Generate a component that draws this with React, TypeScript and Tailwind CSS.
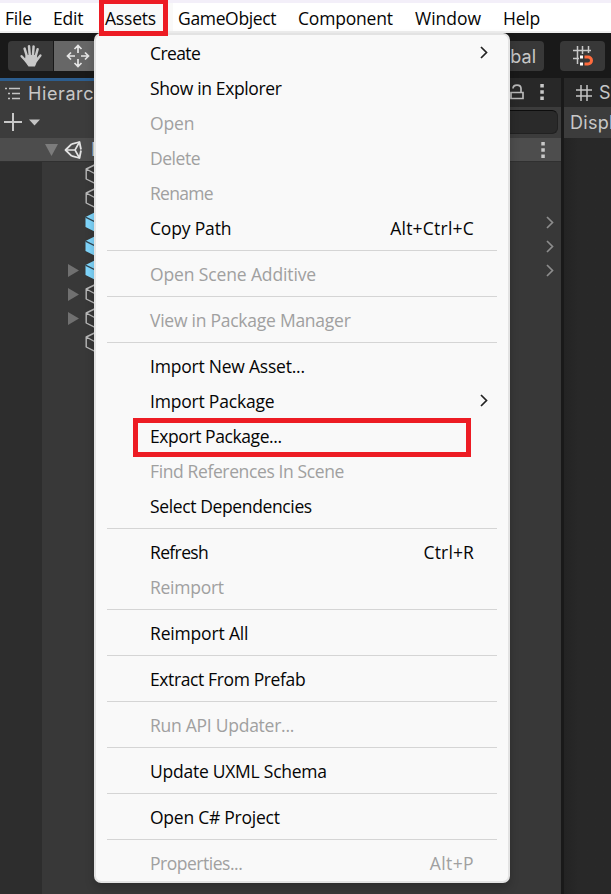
import React from "react";

type Entry = { label: string; t: string; keys?: string; kt?: string; off?: boolean; sub?: boolean } | null;

const entries: Entry[] = [
  { label: "Create", t: "tracking-[-0.6px]", sub: true },
  { label: "Show in Explorer", t: "tracking-[-0.36px]" },
  { label: "Open", t: "tracking-[-0.1px]", off: true },
  { label: "Delete", t: "tracking-[-0.47px]", off: true },
  { label: "Rename", t: "tracking-[-0.7px]", off: true },
  { label: "Copy Path", t: "tracking-[-0.17px]", keys: "Alt+Ctrl+C", kt: "tracking-[0.22px]" },
  null,
  { label: "Open Scene Additive", t: "tracking-[-0.13px]", off: true },
  null,
  { label: "View in Package Manager", t: "tracking-[-0.25px]", off: true },
  null,
  { label: "Import New Asset...", t: "tracking-[-0.22px]" },
  { label: "Import Package", t: "tracking-[-0.2px]", sub: true },
  { label: "Export Package...", t: "tracking-[-0.42px]" },
  { label: "Find References In Scene", t: "tracking-[-0.38px]", off: true },
  { label: "Select Dependencies", t: "tracking-[-0.37px]" },
  null,
  { label: "Refresh", t: "tracking-[-0.63px]", keys: "Ctrl+R", kt: "tracking-[0.13px]" },
  { label: "Reimport", t: "tracking-[-0.26px]", off: true },
  null,
  { label: "Reimport All", t: "tracking-[-0.17px]" },
  null,
  { label: "Extract From Prefab", t: "tracking-[-0.38px]" },
  null,
  { label: "Run API Updater...", t: "tracking-[-0.26px]", off: true },
  null,
  { label: "Update UXML Schema", t: "tracking-[-0.25px]" },
  null,
  { label: "Open C# Project", t: "tracking-[-0.25px]" },
  null,
  { label: "Properties...", t: "tracking-[-0.48px]", keys: "Alt+P", kt: "tracking-[0.4px]", off: true },
];

const tree = [
  { blue: false, arrow: false, open: false },
  { blue: false, arrow: false, open: false },
  { blue: true, arrow: false, open: true },
  { blue: true, arrow: false, open: true },
  { blue: true, arrow: true, open: true },
  { blue: false, arrow: true, open: false },
  { blue: false, arrow: true, open: false },
  { blue: false, arrow: false, open: false },
];

function Hand() {
  return (
    <svg width="24" height="24" viewBox="0 0 24 24" fill="none" stroke="#c8c8c8" strokeLinecap="round" strokeLinejoin="round">
      <path d="M8 12.500 5.600 4.600M10.800 12 10 2.200M13.900 12 14.600 2.400M16.500 13 18.600 5.200" strokeWidth="2.500" />
      <path d="M2.600 12.200 7.500 17.500M21.400 11.500 17.500 16.500" strokeWidth="2.400" />
      <path d="M7.200 11.500H17.400L18 16 15.500 22H9.800L6.300 17Z" fill="#c8c8c8" strokeWidth="1.200" />
    </svg>
  );
}

function Move() {
  return (
    <svg width="24" height="24" viewBox="0 0 24 24" fill="none" stroke="#e6e6e6" strokeWidth="1.700">
      <path d="M12 9V1.500M8.500 5 12 1.500 15.500 5M12 15v7.500M8.500 19l3.500 3.500 3.500-3.500M9 12H1.500M5 8.500 1.500 12 5 15.500M15 12h7.500M19 8.500l3.500 3.500-3.500 3.500" />
    </svg>
  );
}

function Cube({ blue }: { blue: boolean }) {
  return blue ? (
    <svg width="22" height="22" viewBox="0 0 22 22">
      <path d="M.5 6 10.500 1 20 6v10l-9.500 5L.5 16Z" fill="#7fd6fc" />
      <path d="M.5 6.200 10.500 11 20 6.200M10.500 11v10" stroke="#33454f" strokeWidth="1.300" fill="none" />
    </svg>
  ) : (
    <svg width="22" height="22" viewBox="0 0 22 22" fill="none" stroke="#b9b9b9" strokeWidth="1.400" strokeLinejoin="round">
      <path d="M1.200 6 10.500 1.500 19.500 6v10l-9 4.700L1.200 16ZM1.200 6 10.500 11l9-5M10.500 11v9.700" />
    </svg>
  );
}

function UnityLogo() {
  return (
    <svg width="20" height="20" viewBox="0 0 20 20" fill="none" stroke="#e4e4e4" strokeWidth="1.800" strokeLinejoin="round">
      <path d="M7.500 4.200 15.500 2 17 9.500M17 10.500 15.500 18 7.500 15.800M7.500 4.200 1.500 10l6 5.800" />
      <path d="M1.500 10H11M11 10 15.500 2M11 10l4.500 8" strokeWidth="1.600" />
    </svg>
  );
}

function Dots() {
  return (
    <svg width="4" height="16" viewBox="0 0 4 16" fill="#c8c8c8">
      <path d="M.3 0h3.500v3.500H.3zM.3 6.200h3.500v3.500H.3zM.3 12.400h3.500v3.500H.3z" />
    </svg>
  );
}

function Chevron({ className }: { className: string }) {
  return (
    <svg width="8" height="13" viewBox="0 0 8 13" fill="none" stroke="currentColor" className={className}>
      <path d="M1 1 6.500 6.500 1 12" strokeWidth="1.700" />
    </svg>
  );
}

function MenuBar() {
  return (
    <div className="h-[33px] border-t-[3px] border-b-2 border-t-[#f3eff9] border-b-[#efefef] bg-white">
      <nav className="flex h-[28px] text-[17.5px] leading-[30px] tracking-[-0.2px] text-[#050505]">
        <span className="w-[48px] shrink-0 pl-[5px]">File</span>
        <span className="w-[51px] shrink-0 pl-[5px]">Edit</span>
        <span className="w-[74px] shrink-0 bg-[#f9f9f9] pl-[6px]">Assets</span>
        <span className="w-[120px] shrink-0 pl-[5px] tracking-[-0.34px]">GameObject</span>
        <span className="w-[117px] shrink-0 pl-[5px]">Component</span>
        <span className="w-[88px] shrink-0 pl-[5px] tracking-[0px]">Window</span>
        <span className="shrink-0 pl-[5px]">Help</span>
      </nav>
    </div>
  );
}

function Toolbar() {
  return (
    <div className="flex h-[45px] items-start bg-[#191919] pt-2 pl-2">
      <div className="flex h-[30px] w-[45px] shrink-0 items-center justify-center rounded-l bg-[#383838]"><Hand /></div>
      <div className="ml-px flex h-[30px] w-[47px] shrink-0 items-center justify-center bg-[#676767]"><Move /></div>
      <div className="ml-[343px] flex h-[30px] w-[100px] shrink-0 items-center justify-end rounded bg-[#383838] pr-[8px] font-[Inter] text-[18px] text-[#c8c8c8]">Global</div>
      <div className="ml-4 flex h-[30px] w-[45px] shrink-0 items-center justify-center rounded bg-[#383838]">
        <svg width="22" height="22" viewBox="0 0 22 22" fill="none">
          <path d="M1 5.500h18M1 13.500h6M5.500 1v18M10.500 1v8M16.500 1v7" stroke="#c8c8c8" strokeWidth="1.500" />
          <path d="M12.500 12H16a3.500 3.500 0 0 1 0 7h-3.500" stroke="#ff6b3d" strokeWidth="3" />
          <path d="M8 10.500h3v3H8zM8 17.500h3v3H8z" fill="#fff" />
        </svg>
      </div>
    </div>
  );
}

function Hierarchy() {
  return (
    <section className="flex w-[561px] shrink-0 flex-col bg-[#383838]">
      <div className="flex h-[29px] bg-[#282828]">
        <div className="flex w-[150px] items-center border-t-[3px] border-[#2c5d8e] bg-[#3c3c3c] pb-[2px] pl-[5px]">
          <svg width="17" height="15" viewBox="0 0 17 15" stroke="#c4c4c4" strokeWidth="1.400">
            <path d="M0 2.500h2M4 2.500h11M3 7.500h2M7 7.500h8M3 12.500h2M7 12.500h8" />
          </svg>
          <span className="ml-[6px] font-[Inter] text-[18px] tracking-[0.6px] text-[#c8c8c8]">Hierarchy</span>
        </div>
        <div className="flex flex-1 items-center justify-end pb-[2px] pr-[17px]">
          <svg width="14" height="16" viewBox="0 0 14 16" fill="none" stroke="#b8b8b8" strokeWidth="1.700" className="mr-[16px]">
            <path d="M1 8.500h12v6H1zM3 4.500C3 0 11 0 11 4.500V8" />
          </svg>
          <Dots />
        </div>
      </div>
      <div className="flex h-[31px] items-center bg-[#3c3c3c] pb-[2px] pr-[3px] pl-1">
        <svg width="36" height="18" viewBox="0 0 36 18">
          <path d="M0 9h18M9 0v18" stroke="#c8c8c8" strokeWidth="2" />
          <path d="M25 6.500h11l-5.500 6Z" fill="#c4c4c4" />
        </svg>
        <div className="ml-auto h-6 w-[400px] rounded-md border border-[#212121] border-t-[#0d0d0d] bg-[#2a2a2a]" />
      </div>
      <div className="flex h-[24px] items-center border-b border-[#303030] bg-[#4d4d4d] pr-4 pl-[45px]">
        <svg width="13" height="12" viewBox="0 0 13 12" fill="#7c7c7c"><path d="M0 0h13L6.500 12Z" /></svg>
        <span className="ml-[6px]"><UnityLogo /></span>
        <span className="ml-[7px] font-[Inter] text-[18px] text-[#d2d2d2]">Main</span>
        <span className="ml-auto"><Dots /></span>
      </div>
      <div className="flex flex-1">
        <div className="w-[42px] bg-[#2d2d2d]" />
        <div className="flex-1">
          {tree.map((row, i) => (
            <div key={i} className="flex h-6 items-center pr-[7px] pl-[25px]">
              <span className="w-[18px]">
                {row.arrow && <svg width="12" height="13" viewBox="0 0 12 13" fill="#707070"><path d="M1 0 12 6.500 1 13Z" /></svg>}
              </span>
              <Cube blue={row.blue} />
              {row.open && <Chevron className="ml-auto text-[#8d8d8d]" />}
            </div>
          ))}
        </div>
      </div>
    </section>
  );
}

function GamePanel() {
  return (
    <section className="ml-[3px] flex flex-1 flex-col overflow-hidden bg-[#282828] font-[Inter] text-[18px] text-[#c8c8c8]">
      <div className="flex h-[29px] shrink-0 items-center pl-[12px]">
        <svg width="16" height="16" viewBox="0 0 16 16" className="shrink-0" stroke="#c4c4c4" strokeWidth="1.500"><path d="M0 5h16M0 11h16M5 0v16M11 0v16" /></svg>
        <span className="ml-[7px]">S</span>
      </div>
      <div className="flex h-[31px] shrink-0 items-center bg-[#3c3c3c] pl-[6px] tracking-[0.3px] whitespace-nowrap">Displ</div>
      <div className="flex-1 bg-gradient-to-r from-[#232323] to-[#282828] to-30%" />
    </section>
  );
}

function AssetsMenu() {
  return (
    <div className="absolute top-[33px] left-[94px] h-[850px] w-[416px] rounded-[7px] border-2 border-[#e3e3e3] bg-[#f9f9f9] pt-[2px] shadow-[0_5px_10px_rgba(0,0,0,0.2)]">
      {entries.map((e, i) =>
        e === null ? (
          <div key={i} className="mr-[11px] ml-[11px] h-[11px] pt-[3px]"><div className="h-px bg-[#d5d5d5]" /></div>
        ) : (
          <div
            key={i}
            className={"flex h-[35px] items-center justify-between pr-[34px] pb-[2px] pl-[54px] text-[17.5px] " + (e.off ? "text-[#a0a0a0]" : "text-[#050505]")}
          >
            <span className={e.t}>{e.label}</span>
            {e.keys && <span className={e.kt}>{e.keys}</span>}
            {e.sub && <Chevron className="-mt-[3px] -mr-[14px] text-[#222]" />}
          </div>
        ),
      )}
    </div>
  );
}

export default function App() {
  return (
    <div className="relative flex h-[894px] w-[611px] flex-col overflow-hidden bg-[#191919] font-['Open_Sans','Noto_Sans',sans-serif]">
      <MenuBar />
      <Toolbar />
      <div className="flex flex-1">
        <Hierarchy />
        <GamePanel />
      </div>
      <AssetsMenu />
      <div className="absolute top-0 left-[99px] h-[36px] w-[69px] border-[5px] border-t-4 border-[#ed1c24]" />
      <div className="absolute top-[418px] left-[133px] h-[39px] w-[338px] border-[5px] border-[#ed1c24]" />
    </div>
  );
}
